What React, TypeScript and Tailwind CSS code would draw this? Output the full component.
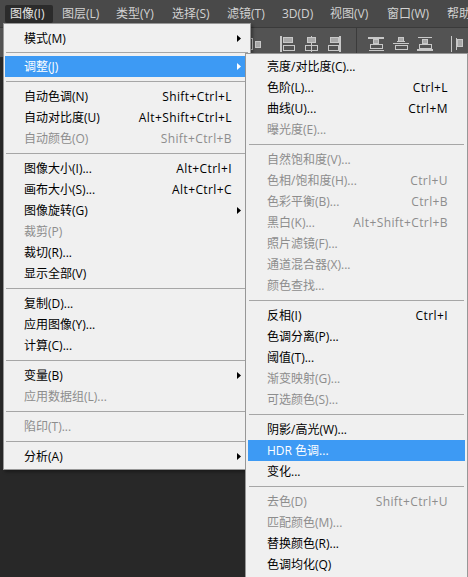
import React from "react";

type Item =
  | { sep: true; small?: boolean }
  | { sep?: false; label: string; shortcut?: string; sub?: boolean; disabled?: boolean; active?: boolean };

const menuBar = [
  { label: "图像(I)", width: "w-[52px]", active: true },
  { label: "图层(L)", width: "w-[54px]" },
  { label: "类型(Y)", width: "w-[56px]" },
  { label: "选择(S)", width: "w-[55px]" },
  { label: "滤镜(T)", width: "w-[55px]" },
  { label: "3D(D)", width: "w-[48px]" },
  { label: "视图(V)", width: "w-[57px]" },
  { label: "窗口(W)", width: "w-[60px]" },
  { label: "帮助(H)", width: "w-[60px]" },
];

const imageMenu: Item[] = [
  { label: "模式(M)", sub: true },
  { sep: true, small: true },
  { label: "调整(J)", sub: true, active: true },
  { sep: true },
  { label: "自动色调(N)", shortcut: "Shift+Ctrl+L" },
  { label: "自动对比度(U)", shortcut: "Alt+Shift+Ctrl+L" },
  { label: "自动颜色(O)", shortcut: "Shift+Ctrl+B", disabled: true },
  { sep: true },
  { label: "图像大小(I)...", shortcut: "Alt+Ctrl+I" },
  { label: "画布大小(S)...", shortcut: "Alt+Ctrl+C" },
  { label: "图像旋转(G)", sub: true },
  { label: "裁剪(P)", disabled: true },
  { label: "裁切(R)..." },
  { label: "显示全部(V)" },
  { sep: true },
  { label: "复制(D)..." },
  { label: "应用图像(Y)..." },
  { label: "计算(C)..." },
  { sep: true },
  { label: "变量(B)", sub: true },
  { label: "应用数据组(L)...", disabled: true },
  { sep: true },
  { label: "陷印(T)...", disabled: true },
  { sep: true },
  { label: "分析(A)", sub: true },
];

const adjustMenu: Item[] = [
  { label: "亮度/对比度(C)..." },
  { label: "色阶(L)...", shortcut: "Ctrl+L" },
  { label: "曲线(U)...", shortcut: "Ctrl+M" },
  { label: "曝光度(E)...", disabled: true },
  { sep: true },
  { label: "自然饱和度(V)...", disabled: true },
  { label: "色相/饱和度(H)...", shortcut: "Ctrl+U", disabled: true },
  { label: "色彩平衡(B)...", shortcut: "Ctrl+B", disabled: true },
  { label: "黑白(K)...", shortcut: "Alt+Shift+Ctrl+B", disabled: true },
  { label: "照片滤镜(F)...", disabled: true },
  { label: "通道混合器(X)...", disabled: true },
  { label: "颜色查找...", disabled: true },
  { sep: true },
  { label: "反相(I)", shortcut: "Ctrl+I" },
  { label: "色调分离(P)..." },
  { label: "阈值(T)..." },
  { label: "渐变映射(G)...", disabled: true },
  { label: "可选颜色(S)...", disabled: true },
  { sep: true },
  { label: "阴影/高光(W)..." },
  { label: "HDR 色调...", active: true },
  { label: "变化..." },
  { sep: true },
  { label: "去色(D)", shortcut: "Shift+Ctrl+U", disabled: true },
  { label: "匹配颜色(M)...", disabled: true },
  { label: "替换颜色(R)..." },
  { label: "色调均化(Q)" },
];

function Arrow({ light }: { light?: boolean }) {
  return (
    <svg width="4" height="7" viewBox="0 0 4 7">
      <polygon points="0,0 4,3.5 0,7" fill={light ? "#ffffff" : "#000000"} />
    </svg>
  );
}

function MenuRows({ items }: { items: Item[] }) {
  return (
    <>
      {items.map((item, i) => {
        if (item.sep) {
          return (
            <div key={i} className={`flex flex-col justify-center ${item.small ? "h-[7px]" : "h-[9px]"}`}>
              <div className="mx-[1px] h-px bg-[#a6a6a6]" />
            </div>
          );
        }
        const tone = item.active ? "bg-[#3d9af4] text-white" : item.disabled ? "text-[#8d8d8d]" : "text-black";
        return (
          <div key={i} className={`flex h-[21px] items-center pl-[19px] leading-[21px] ${tone}`}>
            <span className="flex-1 whitespace-nowrap">{item.label}</span>
            {item.shortcut && <span className="whitespace-nowrap tracking-[0.4px]">{item.shortcut}</span>}
            <span className="flex w-[17px] justify-end pr-[8px]">{item.sub && <Arrow light={item.active} />}</span>
          </div>
        );
      })}
    </>
  );
}

function ToolIcon({ kind }: { kind: string }) {
  const line = "#c8c8c8";
  const fill = "#a9a9a9";
  return (
    <svg width="16" height="16" viewBox="0 0 16 16" className="shrink-0">
      {kind === "left" && (
        <>
          <line x1="1" y1="0" x2="1" y2="16" stroke={line} strokeWidth="2" />
          <rect x="3.5" y="1.5" width="9" height="5" fill={fill} stroke={line} />
          <rect x="3.5" y="9.5" width="11" height="5" fill="none" stroke={line} />
        </>
      )}
      {kind === "hcenter" && (
        <>
          <line x1="7.5" y1="0" x2="7.5" y2="16" stroke={line} />
          <rect x="3.5" y="1.5" width="8" height="5" fill={fill} stroke={line} />
          <rect x="1.5" y="9.5" width="12" height="5" fill="none" stroke={line} />
        </>
      )}
      {kind === "right" && (
        <>
          <line x1="13" y1="0" x2="13" y2="16" stroke={line} strokeWidth="2" />
          <rect x="3.5" y="1.5" width="8" height="5" fill={fill} stroke={line} />
          <rect x="1.5" y="9.5" width="10" height="5" fill="none" stroke={line} />
        </>
      )}
      {kind === "top" && (
        <>
          <line x1="0" y1="2" x2="16" y2="2" stroke={line} strokeWidth="2" />
          <rect x="5.5" y="3.5" width="5" height="4" fill={fill} stroke={line} />
          <rect x="2.5" y="8.5" width="12" height="4" fill="none" stroke={line} />
          <line x1="1" y1="14.5" x2="16" y2="14.5" stroke={line} />
        </>
      )}
      {kind === "vcenter" && (
        <>
          <rect x="5.5" y="1.5" width="5" height="4" fill={fill} stroke={line} />
          <line x1="0" y1="7.5" x2="16" y2="7.5" stroke={line} />
          <rect x="2.5" y="9.5" width="12" height="4" fill="none" stroke={line} />
          <line x1="4" y1="5.5" x2="12" y2="5.5" stroke={line} />
        </>
      )}
      {kind === "bottom" && (
        <>
          <line x1="1" y1="1.5" x2="15" y2="1.5" stroke={line} />
          <rect x="5.5" y="3.5" width="5" height="4" fill={fill} stroke={line} />
          <rect x="2.5" y="8.5" width="12" height="4" fill="none" stroke={line} />
          <line x1="0" y1="14" x2="16" y2="14" stroke={line} strokeWidth="2" />
        </>
      )}
      {kind === "dist" && (
        <>
          <rect x="1.5" y="2.5" width="5" height="11" fill="none" stroke={line} />
          <rect x="9.5" y="5.5" width="5" height="6" fill={fill} stroke={line} />
        </>
      )}
      {kind === "dist2" && (
        <>
          <line x1="1.5" y1="0" x2="1.5" y2="16" stroke={line} />
          <line x1="6.5" y1="2" x2="6.5" y2="14" stroke={line} />
          <rect x="7.5" y="3.5" width="5" height="7" fill={fill} stroke={line} />
        </>
      )}
    </svg>
  );
}

export default function App() {
  return (
    <div className="relative h-[577px] w-[468px] overflow-hidden bg-[#282828] font-[family-name:'Open_Sans','Noto_Sans_CJK_SC',sans-serif] text-[12px]">
      <div className="flex h-[27px] items-center overflow-hidden whitespace-nowrap bg-[#494949] pl-[5px] text-[#d2d2d2]">
        {menuBar.map((m) =>
          m.active ? (
            <div key={m.label} className={`${m.width} shrink-0`}>
              <div className="flex h-[18px] w-[48px] items-center rounded-[2px] bg-[#2b2b2b] pl-[5px] text-[#e6e6e6]">
                {m.label}
              </div>
            </div>
          ) : (
            <div key={m.label} className={`${m.width} shrink-0 pl-[5px]`}>
              {m.label}
            </div>
          )
        )}
      </div>

      <div className="flex h-[30px] items-start border-t border-[#3a3a3a] bg-[#535353] pl-[246px] pt-[8px]">
        <ToolIcon kind="dist" />
        <div className="ml-[18px]">
          <ToolIcon kind="left" />
        </div>
        <div className="ml-[8px]">
          <ToolIcon kind="hcenter" />
        </div>
        <div className="ml-[7px]">
          <ToolIcon kind="right" />
        </div>
        <div className="-mt-[8px] ml-[13px] h-[30px] w-px bg-[#3b3b3b]" />
        <div className="ml-[11px]">
          <ToolIcon kind="top" />
        </div>
        <div className="ml-[9px]">
          <ToolIcon kind="vcenter" />
        </div>
        <div className="ml-[8px]">
          <ToolIcon kind="bottom" />
        </div>
        <div className="ml-[17px]">
          <ToolIcon kind="dist2" />
        </div>
      </div>

      <div className="absolute left-[3px] top-[23px] w-[248px] border border-[#979797] bg-[#f0f0f0] px-[1px] pb-[2px] pt-[4px] shadow-[2px_2px_3px_rgba(0,0,0,0.35)]">
        <MenuRows items={imageMenu} />
      </div>

      <div className="absolute left-[245px] top-[53px] w-[223px] border border-[#979797] bg-[#f0f0f0] px-[2px] pt-[2px] pb-[2px]">
        <MenuRows items={adjustMenu} />
      </div>
    </div>
  );
}
